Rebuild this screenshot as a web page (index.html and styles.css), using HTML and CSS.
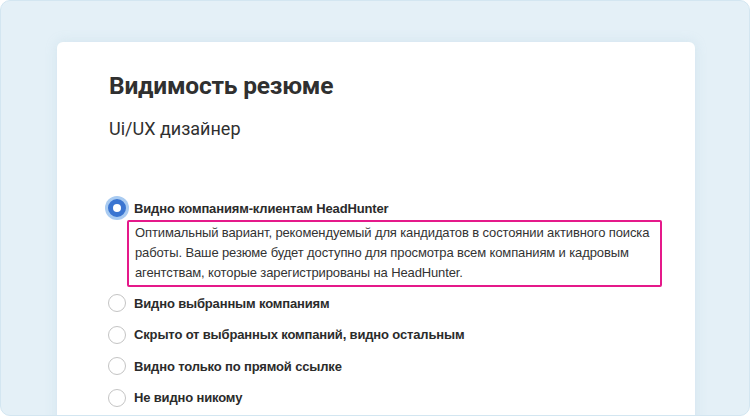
FILE: index.html
```html
<!DOCTYPE html>
<html lang="ru">
<head>
<meta charset="utf-8">
<link rel="stylesheet" href="styles.css">
</head>
<body>
<div class="frame">
  <div class="card">
    <h1 class="title">Видимость резюме</h1>
    <div class="subtitle">Ui/UX дизайнер</div>
    <div class="options">
      <div class="option selected">
        <div class="row"><span class="radio"></span><span class="label">Видно компаниям-клиентам HeadHunter</span></div>
        <div class="desc">Оптимальный вариант, рекомендуемый для кандидатов в состоянии активного поиска работы. Ваше резюме будет доступно для просмотра всем компаниям и кадровым агентствам, которые зарегистрированы на HeadHunter.</div>
      </div>
      <div class="option"><div class="row"><span class="radio"></span><span class="label">Видно выбранным компаниям</span></div></div>
      <div class="option"><div class="row"><span class="radio"></span><span class="label">Скрыто от выбранных компаний, видно остальным</span></div></div>
      <div class="option"><div class="row"><span class="radio"></span><span class="label">Видно только по прямой ссылке</span></div></div>
      <div class="option"><div class="row"><span class="radio"></span><span class="label">Не видно никому</span></div></div>
    </div>
  </div>
</div>
</body>
</html>
```
FILE: styles.css
```css
html, body {
  margin: 0;
  padding: 0;
  background: #ffffff;
}
body {
  width: 750px;
  height: 417px;
  overflow: hidden;
}
.frame {
  box-sizing: border-box;
  width: 750px;
  height: 416px;
  background: #e4f0f7;
  border: 1px solid #d3e6f1;
  border-radius: 10px;
  padding: 41px 54px 0 56px;
  overflow: hidden;
}
.card {
  background: #ffffff;
  border-radius: 6px;
  height: 400px;
  padding: 28px 33px 0 52px;
  box-shadow: 0 0 12px rgba(160, 195, 215, 0.25);
}
.title {
  margin: 0;
  font-family: Roboto, "Liberation Sans", sans-serif;
  font-weight: 700;
  font-size: 24.5px;
  line-height: 32px;
  color: #303030;
  letter-spacing: -0.2px;
}
.subtitle {
  margin-top: 15px;
  font-family: Roboto, "Liberation Sans", sans-serif;
  font-size: 18px;
  line-height: 24px;
  color: #303030;
}
.options {
  margin-top: 56px;
  display: flex;
  flex-direction: column;
  gap: 9.5px;
}
.row {
  display: flex;
  align-items: center;
  gap: 8px;
  height: 22px;
}
.radio {
  box-sizing: border-box;
  width: 18px;
  height: 18px;
  margin-left: -1px;
  border-radius: 50%;
  border: 1px solid #c4c4c4;
  background: #fff;
  flex: none;
}
.selected .radio {
  border: 5px solid #3a75d1;
  background: #fff;
  box-shadow: 0 0 0 3px #a9cbf1;
}
.label {
  font-family: "Liberation Sans", Arial, sans-serif;
  font-weight: 700;
  font-size: 13px;
  letter-spacing: -0.15px;
  color: #2b2b2b;
}
.desc {
  margin: 1px 0 -4.5px 18px;
  border: 2px solid #e5198a;
  border-radius: 2px;
  padding: 1px 4px 2px 6px;
  font-family: "Liberation Sans", Arial, sans-serif;
  font-size: 13px;
  line-height: 20px;
  letter-spacing: -0.12px;
  color: #333333;
}
```
